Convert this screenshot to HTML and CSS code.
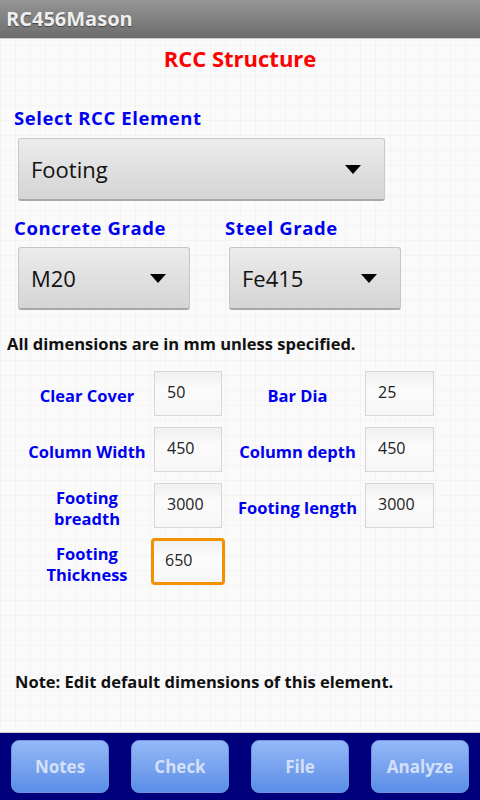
FILE: index.html
```html
<!DOCTYPE html>
<html lang="en">
<head>
  <meta charset="UTF-8">
  <title>RC456Mason - RCC Structure</title>
  <link rel="stylesheet" href="styles.css">
</head>
<body>
  <div class="titlebar">RC456Mason</div>

  <div class="contenido">
    <h1 class="titulo">RCC Structure</h1>

    <div class="etiqueta">Select RCC Element</div>
    <div class="spinner ancho">
      <span>Footing</span>
      <span class="flecha"></span>
    </div>

    <div class="grados">
      <div class="col">
        <div class="etiqueta">Concrete Grade</div>
        <div class="spinner corto">
          <span>M20</span>
          <span class="flecha"></span>
        </div>
      </div>
      <div class="col">
        <div class="etiqueta">Steel Grade</div>
        <div class="spinner corto">
          <span>Fe415</span>
          <span class="flecha"></span>
        </div>
      </div>
    </div>

    <p class="aviso">All dimensions are in mm unless specified.</p>

    <div class="campos">
      <label class="lbl">Clear Cover</label>
      <div class="caja">50</div>
      <label class="lbl lbl2">Bar Dia</label>
      <div class="caja">25</div>

      <label class="lbl">Column Width</label>
      <div class="caja">450</div>
      <label class="lbl lbl2">Column depth</label>
      <div class="caja">450</div>

      <label class="lbl">Footing<br>breadth</label>
      <div class="caja">3000</div>
      <label class="lbl lbl2">Footing length</label>
      <div class="caja">3000</div>

      <label class="lbl">Footing<br>Thickness</label>
      <div class="caja foco">650</div>
    </div>

    <p class="nota">Note: Edit default dimensions of this element.</p>
  </div>

  <div class="barra">
    <button class="boton">Notes</button>
    <button class="boton">Check</button>
    <button class="boton">File</button>
    <button class="boton">Analyze</button>
  </div>
</body>
</html>
```

FILE: styles.css
```css
html, body { margin: 0; padding: 0; }
body {
  font-family: "Open Sans", "DejaVu Sans", sans-serif;
  width: 480px; height: 800px;
  display: flex; flex-direction: column;
  background-color: #fafafa;
  background-image:
    linear-gradient(rgba(0,0,0,0.025) 1px, transparent 1px),
    linear-gradient(90deg, rgba(0,0,0,0.025) 1px, transparent 1px);
  background-size: 15px 15px;
  overflow: hidden;
}

.titlebar {
  height: 38px; line-height: 38px;
  padding-left: 6px;
  background: linear-gradient(#959595, #6c6c6c);
  border-bottom: 1px solid #d0d0d0;
  color: #efefef; font-weight: bold; font-size: 20px;
  text-shadow: 0 1px 1px #444;
}

.contenido { padding: 0 0 0 14px; }
.titulo { margin: 4px 0 0; text-align: center; padding-right: 14px; color: #f00; font-size: 22px; line-height: 30px; }

.etiqueta { color: #0000f0; font-weight: bold; font-size: 18.5px; letter-spacing: 0.6px; line-height: 24px; }
.contenido > .etiqueta { margin-top: 33px; }

.spinner {
  height: 63px; margin: 7px 0 0 4px;
  display: flex; align-items: center; justify-content: space-between;
  padding: 0 23px 0 12px; box-sizing: border-box;
  background: linear-gradient(#ececec, #d4d4d4);
  border: 1px solid #c6c6c6; border-bottom: 2px solid #a9a9a9;
  border-radius: 3px;
  color: #111; font-size: 22px;
}
.ancho { width: 367px; margin-top: 8px; }
.corto { width: 172px; }
.flecha { width: 0; height: 0; border-left: 8px solid transparent; border-right: 8px solid transparent; border-top: 9px solid #000; }

.grados { display: flex; gap: 35px; margin-top: 15px; }

.aviso, .nota { margin: 0; font-weight: bold; font-size: 16.5px; color: #111; }
.aviso { margin: 22px 0 0 -7px; }

.campos {
  display: grid;
  grid-template-columns: 134px 68px 143px 69px;
  grid-auto-rows: 45px; row-gap: 11px;
  margin: 16px 0 0 6px;
}
.lbl {
  display: flex; align-items: center; justify-content: center; text-align: center;
  padding-top: 4px;
  color: #0000f0; font-weight: bold; font-size: 16.5px; line-height: 21px;
}
.lbl2 { padding-left: 8px; }
.caja {
  box-sizing: border-box;
  border: 1px solid #d6d6d6;
  background: linear-gradient(#f0f0f0, #fbfbfb 40%, #f6f6f6);
  padding: 9px 0 0 12px;
  font-size: 16px; color: #222;
}
.foco { border: 3px solid #f39200; border-radius: 4px; padding: 8px 0 0 11px; margin: -1px -3px -1px -3px; }

.nota { margin: 86px 0 0 1px; }

.barra {
  margin-top: auto; height: 68px;
  border-top: 1px solid #d0d0d0;
  background: #00007c;
  display: grid; grid-template-columns: repeat(4, 1fr); gap: 22px;
  padding: 7px 11px; box-sizing: border-box;
}
.boton {
  font-family: inherit; font-weight: bold; font-size: 17px;
  color: #d4e0f8;
  border: 1px solid #6d96e0; border-radius: 8px;
  background: linear-gradient(#95b9f8, #5b8de6);
}
```
